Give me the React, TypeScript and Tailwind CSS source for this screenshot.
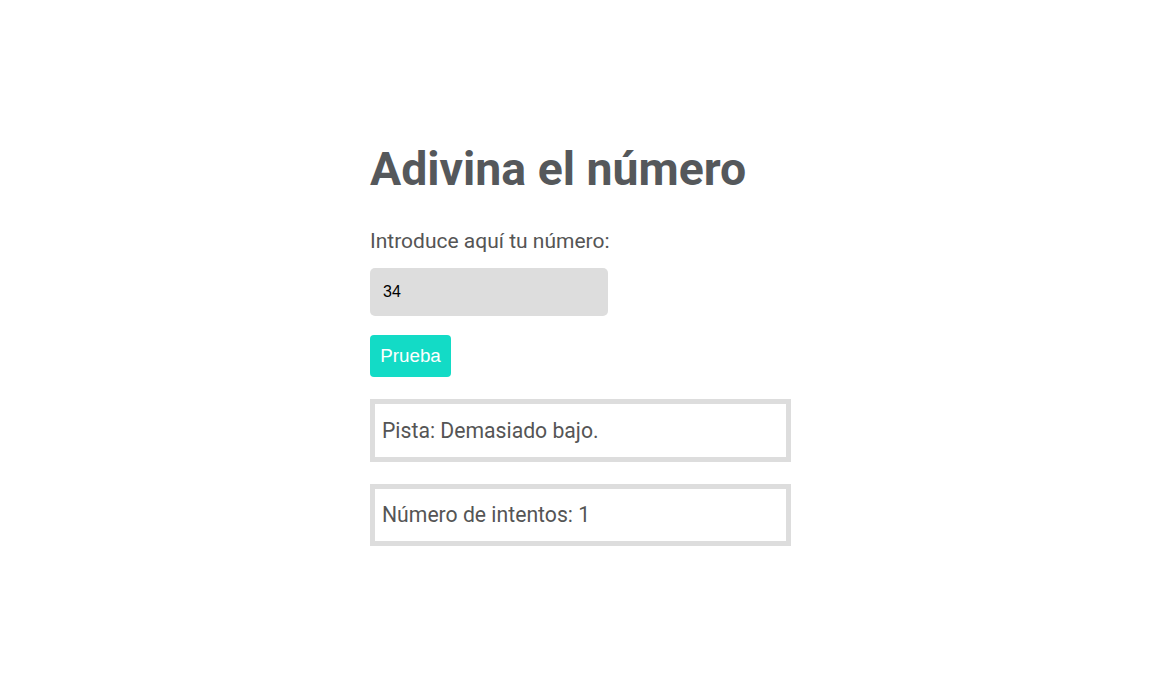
export default function App() {
  return (
    <div className="min-h-screen bg-white" style={{ fontFamily: "Roboto, sans-serif" }}>
      <div className="mx-auto w-[424px] pt-[146px]">
        <h1 className="text-[46.4px] font-bold leading-[46px] text-[#55585b]">Adivina el número</h1>

        <label className="mt-[39px] block text-[21px] leading-[21px] text-[#555]">
          Introduce aquí tu número:
        </label>

        <input
          type="number"
          defaultValue="34"
          className="mt-[16px] block h-[48px] w-[238px] rounded-[5px] bg-[#dddddd] px-[13px] text-[16px] text-black outline-none"
          style={{ fontFamily: '"Liberation Sans", Arial, sans-serif' }}
        />

        <button
          className="mt-[19px] block h-[42px] w-[81px] rounded-[4px] bg-[#13dbc6] text-[18.8px] text-white"
          style={{ fontFamily: '"Liberation Sans", Arial, sans-serif' }}
        >
          Prueba
        </button>

        <div className="mt-[22px] flex h-[63px] w-[421px] items-center border-[5px] border-[#dddddd] px-[7px] text-[21.2px] text-[#555]">
          Pista: Demasiado bajo.
        </div>

        <div className="mt-[22px] flex h-[62px] w-[421px] items-center border-[5px] border-[#dddddd] px-[7px] text-[21.2px] text-[#555]">
          Número de intentos: 1
        </div>
      </div>
    </div>
  )
}
